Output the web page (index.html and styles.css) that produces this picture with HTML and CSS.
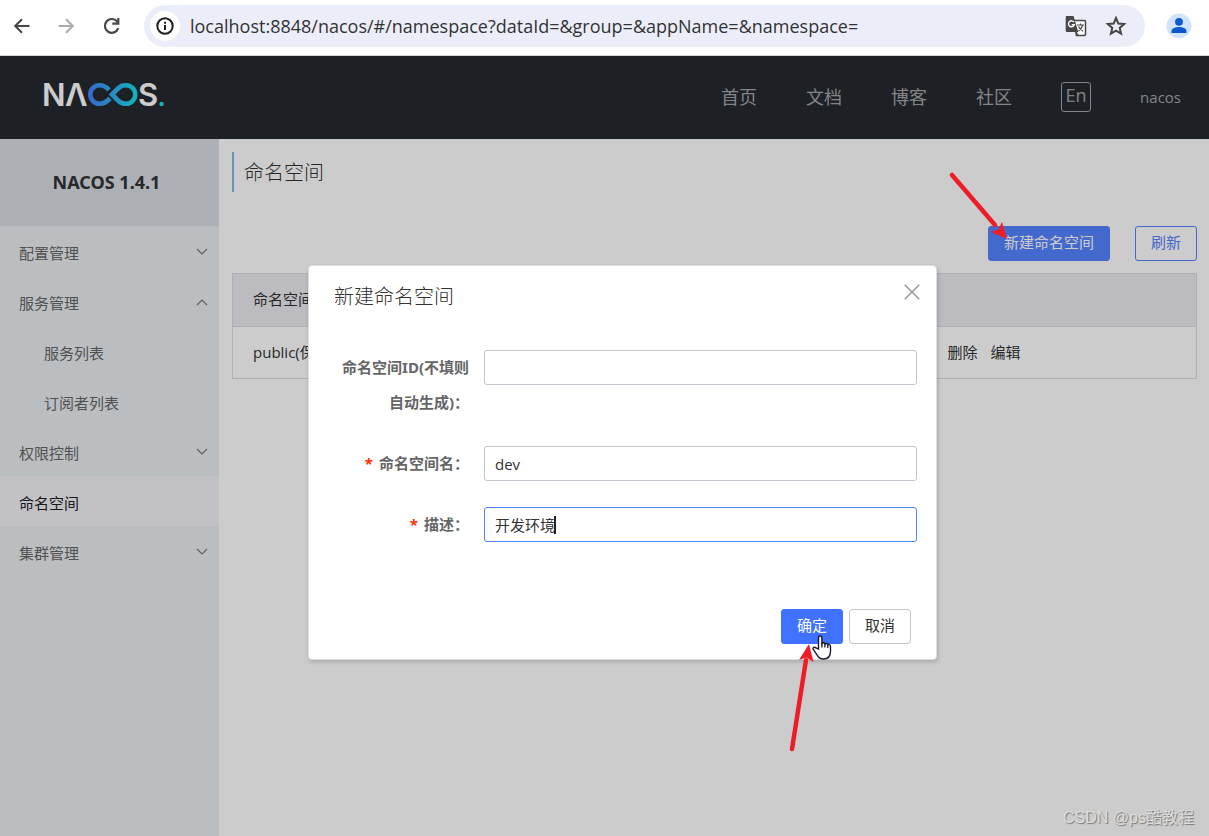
FILE: index.html
```html
<!DOCTYPE html>
<html lang="zh-CN">
<head>
<meta charset="utf-8">
<title>Nacos</title>
<link rel="stylesheet" href="styles.css">
</head>
<body>
<div class="browser">
  <button class="tool" aria-label="后退"><svg width="20" height="20" viewBox="0 0 20 20" fill="none" stroke="#474747" stroke-width="2"><path d="M17.500 10H3.500M10 3.200L3.200 10l6.800 6.800"/></svg></button>
  <button class="tool" aria-label="前进"><svg width="20" height="20" viewBox="0 0 20 20" fill="none" stroke="#ababab" stroke-width="2"><path d="M1.500 10h14M9 3.200l6.800 6.800-6.800 6.800"/></svg></button>
  <button class="tool" aria-label="刷新页面"><svg width="20" height="20" viewBox="0 0 20 20" fill="none" stroke="#474747" stroke-width="2.200"><path d="M16.300 12.200A6.900 6.900 0 1 1 15.500 6M16.300 2v5.700h-6"/></svg></button>
  <div class="address">
    <span class="info"><svg width="18" height="18" viewBox="0 0 18 18" fill="none" stroke="#1f1f1f" stroke-width="2"><circle cx="9" cy="9" r="7.700"/><path d="M9 8v5M9 4.700v2"/></svg></span>
    <input class="url" aria-label="地址" value="localhost:8848/nacos/#/namespace?dataId=&amp;group=&amp;appName=&amp;namespace=">
    <svg width="22" height="22" viewBox="0 0 22 22"><path d="M8 5.500h11.500a1 1 0 0 1 1 1v13a1 1 0 0 1-1 1h-8z" fill="#fff" stroke="#474747" stroke-width="1.500"/><path d="M2 1h6.500l4.800 16H2a1.300 1.300 0 0 1-1.300-1.300V2.300A1.300 1.300 0 0 1 2 1z" fill="#474747"/><path d="M9 7.200A3 3 0 1 0 9.300 9.800H6.700" fill="none" stroke="#fff" stroke-width="1.400"/><path d="M12 10h7M15.500 8.500V10M17.700 10c-.6 2.500-2.200 4.500-4.200 6M13.500 11.500c1 2 2.500 3.500 4.500 4.700M11 17l2 3" fill="none" stroke="#474747" stroke-width="1.200"/></svg>
    <svg width="22" height="22" viewBox="0 0 22 22" fill="none" stroke="#474747" stroke-width="2"><path d="M11 3l2.300 5.500 5.900.5-4.500 3.900 1.400 5.800-5.100-3.100-5.100 3.100 1.400-5.800L2.800 9l5.900-.5z"/></svg>
  </div>
  <svg class="avatar" width="26" height="26" viewBox="0 0 26 26"><circle cx="13" cy="13" r="12.500" fill="#d3e3fd"/><circle cx="13" cy="8.800" r="3.900" fill="#0b57d0"/><path d="M5.500 20v-2c0-2.500 4.500-3.900 7.500-3.900s7.500 1.400 7.500 3.900v2z" fill="#0b57d0"/></svg>
</div>

<div class="app">
  <header class="header">
    <a class="logo" href="#" aria-label="Nacos">
      <svg width="128" height="46" viewBox="-2 -6 128 46">
        <defs><linearGradient id="loop" gradientUnits="userSpaceOnUse" x1="46" y1="0" x2="95" y2="0"><stop offset="0" stop-color="#4285ff"/><stop offset="1" stop-color="#1be0e8"/></linearGradient></defs>
        <g class="logo-text"><text x="-1" y="26">N</text><text x="22" y="26">Λ</text><text x="95" y="26">S</text></g>
        <g fill="none" stroke="url(#loop)" stroke-width="4.600"><path d="M67 18.500C63 22.500 60 23.700 56.500 23.700A9.200 9.200 0 0 1 56.500 5.300C60 5.300 63 6.500 66 10"/><path d="M69 14.500L75.500 8C77.500 6 80 5.300 83 5.300a9.200 9.200 0 0 1 0 18.400c-3 0-5.500-.8-7.500-2.700z"/></g>
        <circle cx="118.500" cy="24" r="2.200" fill="#1be0e8"/>
      </svg>
    </a>
    <nav class="nav">
      <a href="#">首页</a><a href="#">文档</a><a href="#">博客</a><a href="#">社区</a>
      <button class="lang">En</button>
      <a class="user" href="#">nacos</a>
    </nav>
  </header>

  <div class="body">
    <aside class="side">
      <h1 class="product">NACOS 1.4.1</h1>
      <nav class="menu">
        <a href="#">配置管理<svg width="12" height="8" viewBox="0 0 12 8"><path d="M1 1l5 5 5-5"/></svg></a>
        <a href="#">服务管理<svg width="12" height="8" viewBox="0 0 12 8"><path d="M1 7l5-5 5 5"/></svg></a>
        <a class="sub" href="#">服务列表</a>
        <a class="sub" href="#">订阅者列表</a>
        <a href="#">权限控制<svg width="12" height="8" viewBox="0 0 12 8"><path d="M1 1l5 5 5-5"/></svg></a>
        <a class="active" href="#">命名空间</a>
        <a href="#">集群管理<svg width="12" height="8" viewBox="0 0 12 8"><path d="M1 1l5 5 5-5"/></svg></a>
      </nav>
    </aside>
    <main class="main">
      <h2 class="title">命名空间</h2>
      <div class="actions">
        <button class="btn primary">新建命名空间</button>
        <button class="btn outline">刷新</button>
      </div>
      <table class="table">
        <thead><tr><th>命名空间名称</th><th class="ops"></th></tr></thead>
        <tbody><tr><td>public(保留空间)</td><td class="ops"><a href="#">删除</a><a href="#">编辑</a></td></tr></tbody>
      </table>
    </main>
  </div>
  <div class="mask"></div>

  <form class="dialog" role="dialog" aria-labelledby="dialog-title">
    <div class="dialog-head">
      <h3 id="dialog-title">新建命名空间</h3>
      <button class="close" type="button" aria-label="关闭"><svg width="16" height="16" viewBox="0 0 16 16"><path d="M.7.700l14.600 14.600M15.300.700L.7 15.300" stroke="#999" stroke-width="1.500"/></svg></button>
    </div>
    <div class="fields">
      <label for="ns-id">命名空间ID(不填则<br>自动生成)：</label>
      <div class="control"><input id="ns-id" type="text"></div>
      <label for="ns-name"><span class="star">*</span>命名空间名：</label>
      <div class="control"><input id="ns-name" type="text" value="dev"></div>
      <label for="ns-desc"><span class="star">*</span>描述：</label>
      <div class="control"><input id="ns-desc" class="focused" type="text" value="开发环境"><span class="caret"></span></div>
    </div>
    <div class="dialog-foot">
      <button class="btn primary" type="button">确定</button>
      <button class="btn plain" type="button">取消</button>
    </div>
  </form>
</div>

<svg class="mark mark-new" width="70" height="80" viewBox="0 0 70 80"><path d="M7 10L50 60" stroke="#ee1c25" stroke-width="4.500" stroke-linecap="round"/><path d="M62 74L45 66.500 53 65 57 57z" fill="#ee1c25"/></svg>
<svg class="mark mark-ok" width="40" height="120" viewBox="0 0 40 120"><path d="M12 109L26 20" stroke="#ee1c25" stroke-width="4.500" stroke-linecap="round"/><path d="M29 4L19 20l7.500-2.500L33.500 22z" fill="#ee1c25"/></svg>
<svg class="mark pointer" width="20" height="26" viewBox="0 0 20 26"><path d="M6.500 14V3c0-2.600 3.400-2.600 3.400 0v5.500c1-1.300 2.700-.8 3 .4 1-.9 2.600-.4 2.900.8 1.400-.7 2.700.2 2.700 1.700V16c0 4.500-2 8-7 8-3.500 0-5-1.500-6.500-4.200L1.300 14.500c-1-2 1.200-3 2.500-1.600z" fill="#fff" stroke="#1a1a2e" stroke-width="1.400"/><path d="M9.900 8v4.500M12.900 9v3.500M15.800 10v3" stroke="#1a1a2e" stroke-width="1.300"/></svg>
<div class="watermark">CSDN @ps酷教程</div>
</body>
</html>
```
FILE: styles.css
```css
* { box-sizing: border-box; }
body {
  margin: 0;
  min-height: 100vh;
  display: flex;
  flex-direction: column;
  position: relative;
  font: 15px/20px "Open Sans", "Noto Sans CJK SC", sans-serif;
  color: #333;
}
a { color: inherit; text-decoration: none; }
button, input { font: inherit; color: inherit; }
h1, h2, h3 { margin: 0; font-weight: 400; }

.browser {
  height: 56px;
  padding: 5px 17px 8px 12px;
  display: flex;
  align-items: center;
  background: #fff;
  border-bottom: 1px solid #d9d9db;
}
.tool { padding: 0; margin-right: 25px; border: 0; background: none; display: flex; }
.tool:nth-of-type(3) { margin-right: 22px; }
.address {
  flex: 1;
  height: 42px;
  padding: 0 18px 0 6px;
  display: flex;
  align-items: center;
  gap: 18px;
  border-radius: 21px;
  background: #ebeef8;
}
.info {
  width: 30px;
  height: 30px;
  margin-right: -8px;
  display: flex;
  align-items: center;
  justify-content: center;
  border-radius: 50%;
  background: #fff;
}
.url { flex: 1; min-width: 0; padding: 0; border: 0; background: none; font-size: 18px; line-height: 28px; color: #333; }
.avatar { margin-left: 21px; }

.app { flex: 1; display: flex; flex-direction: column; position: relative; }
.header {
  height: 83px;
  padding: 0 28px 2px 41px;
  display: flex;
  align-items: center;
  justify-content: space-between;
  background: #252a2f;
}
.logo { display: flex; }
.logo-text { font: 600 31px Inter, sans-serif; fill: #fff; }
.nav { display: flex; align-items: center; gap: 49px; font-size: 18px; color: #a4a6a8; }
.nav .lang { width: 30px; height: 30px; padding: 0 0 4px; border: 1px solid #a4a6a8; border-radius: 3px; background: none; line-height: 24px; }
.user { font-size: 15px; }

.body { flex: 1; display: flex; }
.side { width: 219px; flex: none; background: #e9eef1; }
.product {
  height: 87px;
  padding-right: 6px;
  background: #d9dde3;
  text-align: center;
  font-family: "Noto Sans", sans-serif;
  font-size: 18px;
  font-weight: 700;
  line-height: 87px;
}
.menu { display: flex; flex-direction: column; color: #666; }
.menu a { height: 50px; padding: 4px 11px 0 19px; display: flex; align-items: center; justify-content: space-between; }
.menu a.sub { padding-left: 44px; }
.menu a.active { background: #f3f2f7; color: #222; }
.menu svg { margin-bottom: 2px; fill: none; stroke: #777; stroke-width: 1.2; }
.main { flex: 1; padding: 13px 12px 0 13px; background: #fff; }
.title { height: 40px; padding-left: 10px; border-left: 2px solid #8ab5e3; font-size: 20px; font-weight: 300; line-height: 42px; }
.actions { margin: 34px 0 12px; display: flex; justify-content: flex-end; gap: 25px; }

.btn { height: 35px; padding: 0 15px 2px; border: 1px solid; border-radius: 3px; line-height: 31px; }
.primary { border-color: #4072ff; background: #4072ff; color: #fff; }
.actions .primary { border-color: #5584ff; background: #5584ff; }
.outline { border-color: #5584ff; background: #fff; color: #5584ff; }
.plain { border-color: #c4c6cf; background: #fff; }

.table { width: 100%; border-collapse: collapse; border: 1px solid #dcdee3; }
.table th, .table td { height: 52px; padding: 0 20px 2px; text-align: left; font-weight: 400; }
.table th { height: 53px; background: #ebecf0; border-bottom: 1px solid #dcdee3; }
.table .ops { width: 269px; }
.ops a { margin-right: 13px; }
.mask { position: absolute; inset: 0; background: rgba(0, 0, 0, .2); }

.dialog {
  position: absolute;
  top: 209px;
  left: 308px;
  width: 629px;
  padding: 16px 19px 15px 25px;
  border: 1px solid #dcdee3;
  border-radius: 4px;
  background: #fff;
  box-shadow: 1px 2px 4px rgba(0, 0, 0, .18);
}
.dialog-head { padding-right: 16px; margin-right: -19px; display: flex; justify-content: space-between; align-items: flex-start; }
.dialog-head h3 { font-size: 20px; font-weight: 300; line-height: 30px; }
.close { width: 16px; height: 16px; margin-top: 2px; padding: 0; border: 0; background: none; display: flex; }
.fields { margin-top: 38px; display: grid; grid-template-columns: 135px 1fr; column-gap: 15px; row-gap: 26px; }
.fields label { text-align: right; font-family: "Noto Sans", "Noto Sans CJK SC", sans-serif; font-weight: 700; line-height: 35px; color: #666; }
.star { margin-right: 6px; color: #ff3000; }
.control { position: relative; }
.control input { display: block; width: 100%; height: 35px; padding: 0 10px; border: 1px solid #c4c6cf; border-radius: 3px; background: #fff; outline: 0; }
.control .focused { border-color: #5584ff; }
.caret { position: absolute; left: 70px; top: 9px; width: 2px; height: 18px; background: #222; }
.dialog-foot { margin: 67px 6px 0 0; display: flex; justify-content: flex-end; gap: 6px; }

.mark { position: absolute; pointer-events: none; fill: none; }
.mark-new { left: 945px; top: 165px; }
.mark-ok { left: 780px; top: 640px; }
.pointer { left: 812px; top: 635px; }
.watermark {
  position: absolute;
  right: 15px;
  bottom: 7px;
  font: 16px/22px "Liberation Sans", "Noto Sans CJK SC", sans-serif;
  color: #dcdcdc;
  text-shadow: 1px 1px 1px #777;
}
```
